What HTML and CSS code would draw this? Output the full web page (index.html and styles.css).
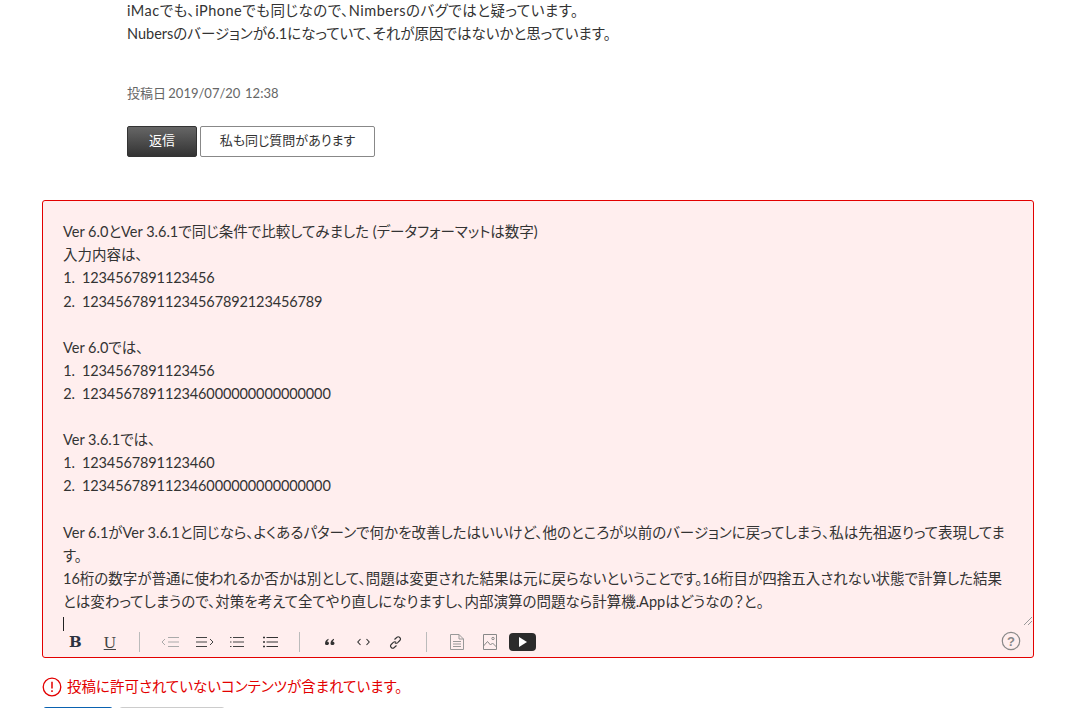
FILE: index.html
```html
<!DOCTYPE html>
<html lang="ja">
<head>
<meta charset="utf-8">
<title>返信</title>
<link rel="stylesheet" href="styles.css">
</head>
<body>
<main class="page">
  <section class="post">
    <p class="first">iMacでも、iPhoneでも同じなので、Nimbersのバグではと疑っています。</p>
    <p>Nubersのバージョンが6.1になっていて、それが原因ではないかと思っています。</p>
    <div class="meta">投稿日 2019/07/20&nbsp; 12:38</div>
    <div class="actions">
      <button class="btn btn-dark">返信</button>
      <button class="btn btn-light">私も同じ質問があります</button>
    </div>
  </section>

  <section class="editor">
    <div class="content">
      <p>Ver 6.0とVer 3.6.1で同じ条件で比較してみました (データフォーマットは数字)</p>
      <p>入力内容は、</p>
      <ol>
        <li>1234567891123456</li>
        <li>12345678911234567892123456789</li>
      </ol>
      <p class="blank">&nbsp;</p>
      <p>Ver 6.0では、</p>
      <ol>
        <li>1234567891123456</li>
        <li>123456789112346000000000000000</li>
      </ol>
      <p class="blank">&nbsp;</p>
      <p>Ver 3.6.1では、</p>
      <ol>
        <li>1234567891123460</li>
        <li>123456789112346000000000000000</li>
      </ol>
      <p class="blank">&nbsp;</p>
      <p>Ver 6.1がVer 3.6.1と同じなら、よくあるパターンで何かを改善したはいいけど、他のところが以前のバージョンに戻ってしまう、私は先祖返りって表現してます。</p>
      <p>16桁の数字が普通に使われるか否かは別として、問題は変更された結果は元に戻らないということです。16桁目が四捨五入されない状態で計算した結果とは変わってしまうので、対策を考えて全てやり直しになりますし、内部演算の問題なら計算機.Appはどうなの？と。</p>
      <p class="caret-line"><span class="caret"></span></p>
    </div>
    <svg class="resize" width="10" height="10" viewBox="0 0 10 10"><path d="M1 9 9 1M5 9 9 5" stroke="#999" fill="none"/></svg>
    <div class="toolbar">
      <div class="tools tools-a">
        <span class="t-b">B</span>
        <span class="t-u">U</span>
      </div>
      <i class="sep"></i>
      <div class="tools tools-b">
        <svg width="19" height="12" viewBox="0 0 19 12" stroke="#aaa" fill="none"><path d="M4 3 1 6l3 3"/><path d="M7 1.500h11M7 6h11M7 10.500h11"/></svg>
        <svg width="20" height="12" viewBox="0 0 20 12" stroke="#444" fill="none"><path d="M1 1.500h11M1 6h11M1 10.500h11"/><path d="m15 3 3 3-3 3"/></svg>
        <svg width="18" height="12" viewBox="0 0 18 12" stroke="#444" fill="none"><path d="M3 1.500h11M3 6h11M3 10.500h11"/><path d="M0 1.500h1.500M0 6h1.500M0 10.500h1.500"/></svg>
        <svg width="15" height="12" viewBox="0 0 15 12" stroke="#333" fill="none"><path d="M3.500 1.500H15M3.500 6H15M3.500 10.500H15"/><path d="M0 1.500h2M0 6h2M0 10.500h2" stroke-width="1.600"/></svg>
      </div>
      <i class="sep"></i>
      <div class="tools tools-c">
        <svg width="14" height="8" viewBox="0 0 14 8" fill="#333"><path d="M1 5.500C1 3 2.500 1.500 4.500.8v1.100C3.700 2.400 3.300 3 3.200 3.700 4.200 3.500 5 4.200 5 5.200 5 6.300 4.200 7 3.100 7 1.800 7 1 6.500 1 5.500ZM6.500 5.500C6.500 3 8 1.500 10 .8v1.100C9.200 2.400 8.800 3 8.700 3.700 9.700 3.500 10.500 4.200 10.500 5.200 10.500 6.300 9.700 7 8.600 7 7.300 7 6.500 6.500 6.500 5.500Z"/></svg>
        <svg width="13" height="8" viewBox="0 0 13 8" fill="none" stroke="#333" stroke-width="1.100"><path d="M3.500 1 .8 4l2.700 3M9.500 1l2.700 3-2.700 3"/></svg>
        <svg width="13" height="13" viewBox="0 0 13 13" fill="none" stroke="#333" stroke-width="1.100"><path d="M5.500 3.500 7.700 1.500c.9-.8 2.200-.8 3 0s.9 2.200.1 3L8.700 6.600c-.9.800-2.100.8-2.900 0"/><path d="M7.500 9.500 5.300 11.500c-.9.800-2.200.8-3 0s-.9-2.200-.1-3L4.300 6.400c.9-.8 2.100-.8 2.900 0"/></svg>
      </div>
      <i class="sep"></i>
      <div class="tools tools-d">
        <svg width="21" height="16" viewBox="0 0 21 16" fill="none" stroke="#999"><path d="M.500.500h8.500l4.500 4.500v10.500h-13zM9 .500V5h4.500M3 7.500h8M3 10h8M3 12.500h8"/></svg>
        <svg width="14" height="16" viewBox="0 0 14 16" fill="none" stroke="#888"><path d="M.500.500h13v15H.500z"/><path d="m.500 12 4-4.500 3 3.500 2-2 4 4"/><circle cx="10" cy="4.500" r="1.200"/></svg>
        <span class="t-video"><svg width="10" height="10" viewBox="0 0 10 10" fill="#fff"><path d="M1 0v10l8-5z"/></svg></span>
      </div>
      <svg class="help" width="20" height="20" viewBox="0 0 20 20"><circle cx="10" cy="10" r="8.700" fill="none" stroke="#888" stroke-width="1.200"/><text x="10" y="14.500" text-anchor="middle" class="help-q">?</text></svg>
    </div>
  </section>

  <div class="error">
    <svg width="20" height="20" viewBox="0 0 20 20"><circle cx="10" cy="10" r="8.800" fill="none" stroke="#e30000" stroke-width="1.300"/><path d="M10 4.800v6.600M10 13.300v1.800" stroke="#e30000" stroke-width="1.500"/></svg>
    <span>投稿に許可されていないコンテンツが含まれています。</span>
  </div>

  <div class="submit">
    <button class="sbtn sbtn-blue"></button>
    <button class="sbtn sbtn-gray"></button>
  </div>
</main>
</body>
</html>
```
FILE: styles.css
```css
* { box-sizing: border-box; }
html, body { margin: 0; height: 708px; overflow: hidden; background: #fff; }
body {
  font-family: "Lato", "Noto Sans CJK JP", sans-serif;
  font-feature-settings: "palt";
  color: #333;
  font-size: 14.5px;
  line-height: 23.1px;
}
p { margin: 0; }
.page { margin-top: -1px; padding: 0 38px 0 42px; }
.post { padding-left: 85px; }
.first { letter-spacing: .5px; }
.meta { margin-top: 37px; font-size: 13px; color: #666; word-spacing: -1px; }
.actions { display: flex; gap: 3px; margin-top: 21px; }
.btn {
  height: 31px;
  font: inherit;
  font-feature-settings: "palt";
  font-size: 13px;
  border-radius: 2px;
  padding: 0 0 2px;
}
.btn-dark {
  width: 70px;
  color: #fff;
  border: 1px solid #333;
  background: linear-gradient(#666, #333);
}
.btn-light {
  width: 175px;
  color: #333;
  background: #fff;
  border: 1px solid #888;
}
.editor {
  position: relative;
  margin-top: 43px;
  height: 458px;
  border: 1px solid #e30000;
  border-radius: 3px;
  background: #ffeeee;
  display: flex;
  flex-direction: column;
}
.content { padding: 19px 20px 0; height: 425px; }
ol { margin: 0; padding: 0 0 0 19px; }
li { letter-spacing: -.12px; }
li::marker { content: counter(list-item) ".\00a0\00a0"; }
.caret-line { height: 23px; display: flex; align-items: center; }
.caret { display: block; width: 1px; height: 14px; background: #222; }
.resize { position: absolute; right: 0; top: 415px; }
.toolbar { display: flex; align-items: center; height: 31px; padding: 1px 0 0 26px; position: relative; }
.tools { display: flex; align-items: center; }
.sep { display: block; width: 1px; height: 20px; background: #bbb; }
.tools-a { gap: 22px; width: 70px; }
.t-b { font-family: "DejaVu Serif", serif; font-weight: 700; font-size: 15px; color: #2c3340; }
.t-u { font-family: "Liberation Serif", serif; font-size: 17px; text-decoration: underline; color: #444; }
.tools-b { width: 159px; gap: 15px; padding-left: 21px; }
.tools-c { width: 126px; gap: 19px; padding-left: 24px; }
.tools-d { gap: 12px; padding-left: 23px; }
.t-video { display: flex; align-items: center; justify-content: center; width: 27px; height: 18px; border-radius: 4px; background: #2b2b2b; }
.help { position: absolute; right: 12px; top: 5px; }
.help-q { font-family: "Liberation Sans", sans-serif; font-size: 13px; font-weight: 700; fill: #888; }
.error { display: flex; align-items: center; gap: 5px; margin-top: 17px; color: #e30000; font-size: 14.5px; }
.submit { display: flex; gap: 6px; margin-top: 9px; padding-left: 1px; }
.sbtn { height: 31px; padding: 0; border-radius: 3px; }
.sbtn-blue { width: 70px; border: 1px solid #0a62b0; background: #0a70c8; }
.sbtn-gray { width: 106px; border: 1px solid #ccc; background: #fff; }
```
